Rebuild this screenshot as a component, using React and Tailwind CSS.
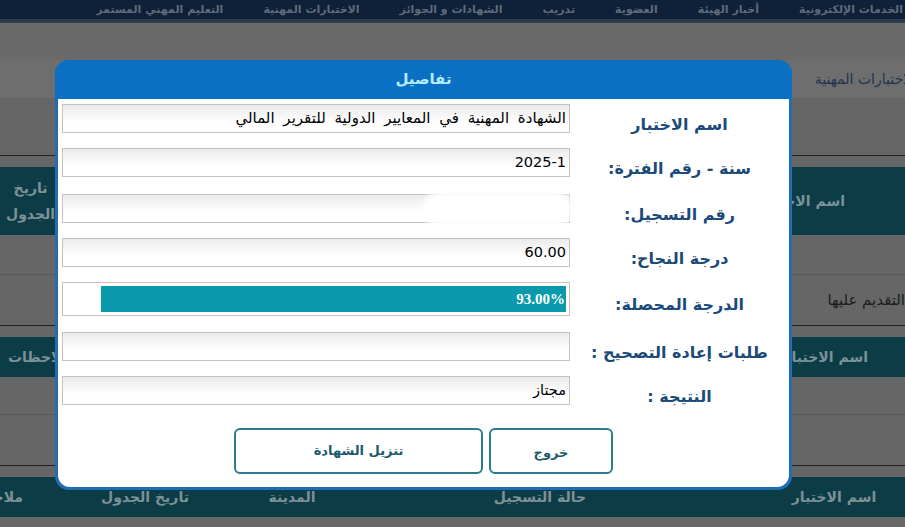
import React from 'react';

const navItems = [
  'الخدمات الإلكترونية',
  'أخبار الهيئة',
  'العضوية',
  'تدريب',
  'الشهادات و الجوائز',
  'الاختبارات المهنية',
  'التعليم المهني المستمر',
];

const rows = [
  { label: 'اسم الاختبار', value: 'الشهادة المهنية في المعايير الدولية للتقرير المالي', mt: 'mt-[5px]', wide: true },
  { label: 'سنة - رقم الفترة:', value: '2025-1', mt: 'mt-[15px]' },
  { label: 'رقم التسجيل:', value: '', blur: true, mt: 'mt-[17px]' },
  { label: 'درجة النجاح:', value: '60.00', mt: 'mt-[15px]' },
  { label: 'الدرجة المحصلة:', progress: 93, mt: 'mt-[15px]' },
  { label: 'طلبات إعادة التصحيح :', value: '', mt: 'mt-[16px]' },
  { label: 'النتيجة :', value: 'مجتاز', mt: 'mt-[15px]' },
];

const kufi = { fontFamily: '"DejaVu Sans", sans-serif' };

function Field({ row }) {
  if (row.progress) {
    return (
      <div className="h-[34px] w-[508px] border border-[#c9c2bb] bg-white p-[3px] flex justify-start">
        <div
          className="h-full bg-[#0a9aab] flex items-center justify-start pr-[1px] text-white font-bold text-[15px]"
          style={{ width: `${row.progress}%`, fontFamily: '"Liberation Serif", serif' }}
        >
          {row.progress.toFixed(2)}%
        </div>
      </div>
    );
  }
  return (
    <div
      className={`relative h-[29px] w-[508px] border border-[#c9c2bb] bg-[linear-gradient(to_bottom,#ebebeb,#ffffff_65%)] flex items-center pr-[3px] text-black ${
        row.wide ? 'text-[15px] [word-spacing:4px]' : 'text-[14.5px]'
      }`}
      dir="rtl"
    >
      {row.value}
      {row.blur && (
        <div className="absolute right-[-4px] top-[-4px] h-[36px] w-[150px] bg-white blur-[3px] rounded-full" />
      )}
    </div>
  );
}

export default function App() {
  return (
    <div className="relative w-[905px] h-[527px] overflow-hidden bg-[#686868]" style={kufi} dir="rtl">
      {/* background page (dimmed) */}
      <div className="h-[19px] bg-[#0f2039] flex items-center gap-[40px] pr-[2px] overflow-hidden">
        {navItems.map((n) => (
          <span key={n} className="whitespace-nowrap text-[11px] font-bold text-[#5f6b78] leading-none">{n}</span>
        ))}
      </div>
      <div className="h-[4px] bg-[#2b3b49]" />
      <div className="h-[37px] bg-[#6a6a6a]" />
      <div className="h-[38px] bg-[#6e6e6e] flex items-center mr-[-10px]">
        <span className="text-[14px] text-[#1f3450] whitespace-nowrap">الاختبارات المهنية</span>
      </div>
      <div className="h-[57px] bg-[#666666]" />
      <div className="h-[1px] bg-[#222]" />
      <div className="h-[11px] bg-[#666666]" />
      <div className="h-[68px] bg-[#0c3d47] flex items-center justify-between pr-[60px] pl-[6px] text-[#7d9196] font-bold text-[14px]">
        <span className="whitespace-nowrap">اسم الاختبار</span>
        <span className="text-center leading-[26px]">تاريخ<br />الجدول</span>
      </div>
      <div className="h-[40px] bg-[#666666] border-b border-[#585858]" />
      <div className="h-[50px] bg-[#666666] flex items-center">
        <span className="text-[15px] text-[#1c1c1c] whitespace-nowrap">التقديم عليها</span>
      </div>
      <div className="h-[1px] bg-[#222]" />
      <div className="h-[11px] bg-[#666666]" />
      <div className="h-[40px] bg-[#0c3d47] flex items-center justify-between pr-[37px] pl-[8px] text-[#7d9196] font-bold text-[14px]">
        <span className="whitespace-nowrap">اسم الاختبار</span>
        <span className="whitespace-nowrap">ملاحظات</span>
      </div>
      <div className="h-[38px] bg-[#666666] border-b border-[#585858]" />
      <div className="h-[50px] bg-[#666666]" />
      <div className="h-[1px] bg-[#222]" />
      <div className="h-[11px] bg-[#666666]" />
      <div className="h-[40px] bg-[#0c3d47] flex items-center text-[#7d9196] font-bold text-[14px]">
        <span className="w-[142px] shrink-0 text-center whitespace-nowrap">اسم الاختبار</span>
        <span className="w-[446px] shrink-0 text-center whitespace-nowrap">حالة التسجيل</span>
        <span className="w-[50px] shrink-0 text-center whitespace-nowrap">المدينة</span>
        <span className="w-[244px] shrink-0 text-center whitespace-nowrap">تاريخ الجدول</span>
        <span className="w-[60px] shrink-0 text-right whitespace-nowrap">ملاحظات</span>
      </div>

      {/* modal */}
      <div className="absolute left-[55px] top-[60px] w-[737px] h-[430px] rounded-[14px] bg-[#1f6db3] flex flex-col overflow-hidden">
        <div className="h-[39px] shrink-0 bg-[#0a70c3] flex items-center justify-center text-[#b5ecff] font-bold text-[15px]">
          تفاصيل
        </div>
        <div className="flex-1 bg-white mx-[3px] mb-[3px] rounded-b-[12px] flex flex-col">
          {rows.map((r) => (
            <div key={r.label} className={`flex items-start ${r.mt}`}>
              <div
                className={`w-[219px] h-[29px] shrink-0 text-center text-[16px] leading-[20px] font-bold text-[#1a4a78] whitespace-nowrap ${
                  r.progress ? 'pt-[13px]' : 'pt-[11px]'
                }`}
              >
                {r.label}
              </div>
              <Field row={r} />
            </div>
          ))}
          <div className="flex gap-[6px] mt-[23px] pr-[176px]">
            <button className="w-[124px] h-[46px] border-2 border-[#2c7d8c] rounded-[6px] text-[13px] font-bold text-[#1c5a6e] pt-[4px]">
              خروج
            </button>
            <button className="w-[249px] h-[46px] border-2 border-[#2c7d8c] rounded-[6px] text-[13px] font-bold text-[#1c5a6e]">
              تنزيل الشهادة
            </button>
          </div>
        </div>
      </div>
    </div>
  );
}
